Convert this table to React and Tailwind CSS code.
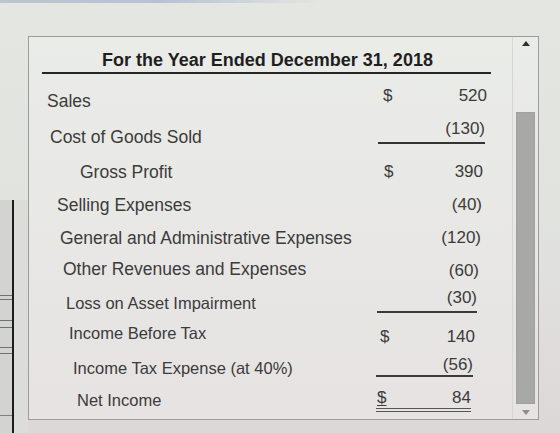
import React from "react";

const rows = [
  { label: "Sales", h: "h-[35px]", lp: "pl-[18px] pt-[7px]", blk: "w-[109px] mr-[25px] pt-[2px]", dp: "pl-[5px]", dollar: "$", amt: "520" },
  { label: "Cost of Goods Sold", h: "h-[36px]", lp: "pl-[21px] pt-[8px]", blk: "w-[107px] mr-[27px] pt-0 h-[25px] border-b-2 border-[#333]", dp: "pl-[5px]", dollar: "", amt: "(130)" },
  { label: "Gross Profit", h: "h-[34px]", lp: "pl-[51px] pt-[7px]", blk: "w-[105px] mr-[29px] pt-[7px]", dp: "pl-[6px]", dollar: "$", amt: "390" },
  { label: "Selling Expenses", h: "h-[33px]", lp: "pl-[28px] pt-[6px]", blk: "w-[104px] mr-[30px] pt-[6px]", dp: "pl-[5px]", dollar: "", amt: "(40)" },
  { label: "General and Administrative Expenses", h: "h-[32px]", lp: "pl-[31px] pt-[6px]", blk: "w-[103px] mr-[31px] pt-[6px]", dp: "pl-[5px]", dollar: "", amt: "(120)" },
  { label: "Other Revenues and Expenses", h: "h-[32px]", lp: "pl-[34px] pt-[5px]", blk: "w-[101px] mr-[33px] pt-[7px]", dp: "pl-[5px]", dollar: "", amt: "(60)" },
  { label: "Loss on Asset Impairment", h: "h-[32px]", lp: "pl-[37px] pt-[7px]", blk: "w-[100px] mr-[35px] pt-[2px] h-[27px] border-b-2 border-[#3a3a3a]", dp: "pl-[5px]", dollar: "", amt: "(30)" },
  { label: "Income Before Tax", h: "h-[32px]", lp: "pl-[40px] pt-[5px]", blk: "w-[97px] mr-[37px] pt-[9px]", dp: "pl-[2px]", dollar: "$", amt: "140" },
  { label: "Income Tax Expense (at 40%)", h: "h-[34px]", lp: "pl-[44px] pt-[8px]", blk: "w-[97px] mr-[39px] pt-[5px] h-[27px] border-b-2 border-[#3a3a3a]", dp: "pl-[2px]", dollar: "", amt: "(56)" },
  { label: "Net Income", h: "h-[32px]", lp: "pl-[48px] pt-[6px]", blk: "w-[95px] mr-[41px] pt-[4px] h-[28px] border-b-4 border-double border-[#555]", dp: "pl-[1px] underline decoration-1 underline-offset-2", dollar: "$", amt: "84" },
];

const small = ["Income Before Tax", "Income Tax Expense (at 40%)", "Net Income", "Loss on Asset Impairment"];

export default function App() {
  return (
    <div
      className="w-[560px] h-[433px] overflow-hidden flex flex-col bg-gradient-to-b from-[#e3e6e1] via-[#e1e3df] to-[#ddd8d8] text-[#3b3b3b]"
      style={{ fontFamily: '"Liberation Sans", Arial, sans-serif' }}
    >
      <div className="h-[3px] w-[320px] bg-gradient-to-r from-[#bcc6cf] via-[#b6c2d2] to-transparent" />
      <div className="flex pt-[33px] flex-1">
        {/* left gutter (edge of another window) */}
        <div className="w-[28px] flex flex-col">
          <div className="h-[164px]" />
          <div className="flex-1 flex">
            <div className="w-[12px] bg-[#d3d4d0] flex flex-col">
              <div className="h-[95px]" />
              <div className="h-[1px] bg-[#6f7274]" />
              <div className="h-[3px]" />
              <div className="h-[1px] bg-[#6f7274]" />
              <div className="h-[20px]" />
              <div className="h-[1px] bg-[#6f7274]" />
              <div className="h-[6px]" />
              <div className="h-[1px] bg-[#6f7274]" />
              <div className="h-[19px]" />
              <div className="h-[1px] bg-[#6f7274]" />
              <div className="h-[5px]" />
              <div className="h-[1px] bg-[#6f7274]" />
              <div className="h-[61px]" />
              <div className="h-[1px] bg-[#7d8082]" />
            </div>
            <div className="w-[2px] bg-[#1d1d1d]" />
            <div className="flex-1 bg-[#dcddd9]" />
          </div>
        </div>

        {/* panel */}
        <div className="w-[511px] h-[384px] border border-[#9c9d9b] bg-gradient-to-b from-[#eaece8] to-[#e6e3e2] flex">
          <div className="flex-1 flex flex-col">
            {/* title */}
            <div className="ml-[13px] mr-[21px] pt-[12px] border-b-2 border-[#262626] h-[37px]">
              <div className="text-center pl-[2px] text-[18px] leading-[22px] font-bold text-[#1f1f1f]">
                For the Year Ended December 31, 2018
              </div>
            </div>
            <div className="h-[10px]" />
            {rows.map((r) => (
              <div key={r.label} className={`flex items-start ${r.h}`}>
                <div
                  className={`flex-1 whitespace-nowrap ${r.lp} ${
                    small.includes(r.label) ? "text-[16.5px]" : "text-[17.5px]"
                  } leading-[20px]`}
                >
                  {r.label}
                </div>
                <div className={`flex items-start text-[17px] leading-[20px] ${r.blk}`}>
                  <span className={r.dp}>{r.dollar}</span>
                  <span className="flex-1 text-right">{r.amt}</span>
                </div>
              </div>
            ))}
          </div>

          {/* scrollbar */}
          <div className="w-[26px] flex flex-col items-center border-l border-[#d6d7d4]">
            <div className="mt-[4px] w-0 h-0 border-x-[4px] border-x-transparent border-b-[5px] border-b-[#2e2e2e]" />
            <div className="mt-[66px] w-[19px] h-[292px] bg-[#a8a9a6] shadow-[inset_0_0_2px_rgba(0,0,0,0.15)]" />
            <div className="flex-1" />
            <div className="mb-[4px] w-0 h-0 border-x-[4px] border-x-transparent border-t-[5px] border-t-[#8e8e8e]" />
          </div>
        </div>
        <div className="flex-1" />
      </div>
    </div>
  );
}
